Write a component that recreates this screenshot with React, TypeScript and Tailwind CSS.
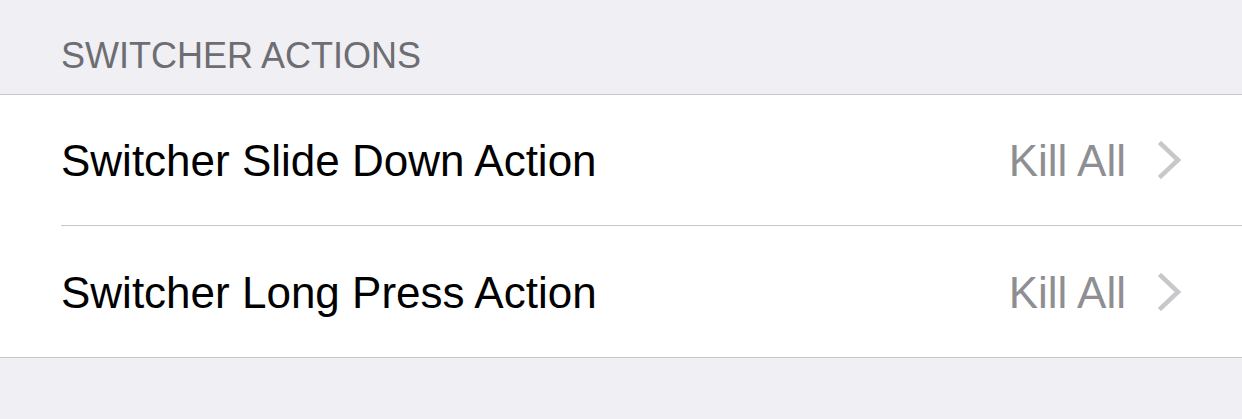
export default function App() {
  const rows = ["Switcher Slide Down Action", "Switcher Long Press Action"]
  return (
    <div className="h-[419px] w-[1242px] overflow-hidden bg-[#efeff4] font-['Liberation_Sans',Arial,sans-serif]">
      <div className="flex h-[94px] items-end pb-[20px] pl-[61px] text-[36px] leading-none text-[#6d6d72]">SWITCHER ACTIONS</div>
      <div className="border-y border-[#c8c7cc] bg-white">
        {rows.map((label, i) => (
          <div key={label} className="flex h-[131px] items-stretch pl-[61px]">
            <div className={`flex flex-1 items-center pr-[60px] ${i < rows.length - 1 ? "border-b border-[#c8c7cc]" : ""}`}>
              <span className="flex-1 pt-[2px] text-[44px] text-black">{label}</span>
              <span className="pt-[2px] text-[44px] text-[#8e8e93]">Kill All</span>
              <svg className="ml-[32px] h-[38px] w-[24px]" viewBox="0 0 24 38" fill="none">
                <path d="M3 3 L20 19 L3 35" stroke="#c7c7cc" strokeWidth="4.5" strokeLinecap="square" />
              </svg>
            </div>
          </div>
        ))}
      </div>
    </div>
  )
}
